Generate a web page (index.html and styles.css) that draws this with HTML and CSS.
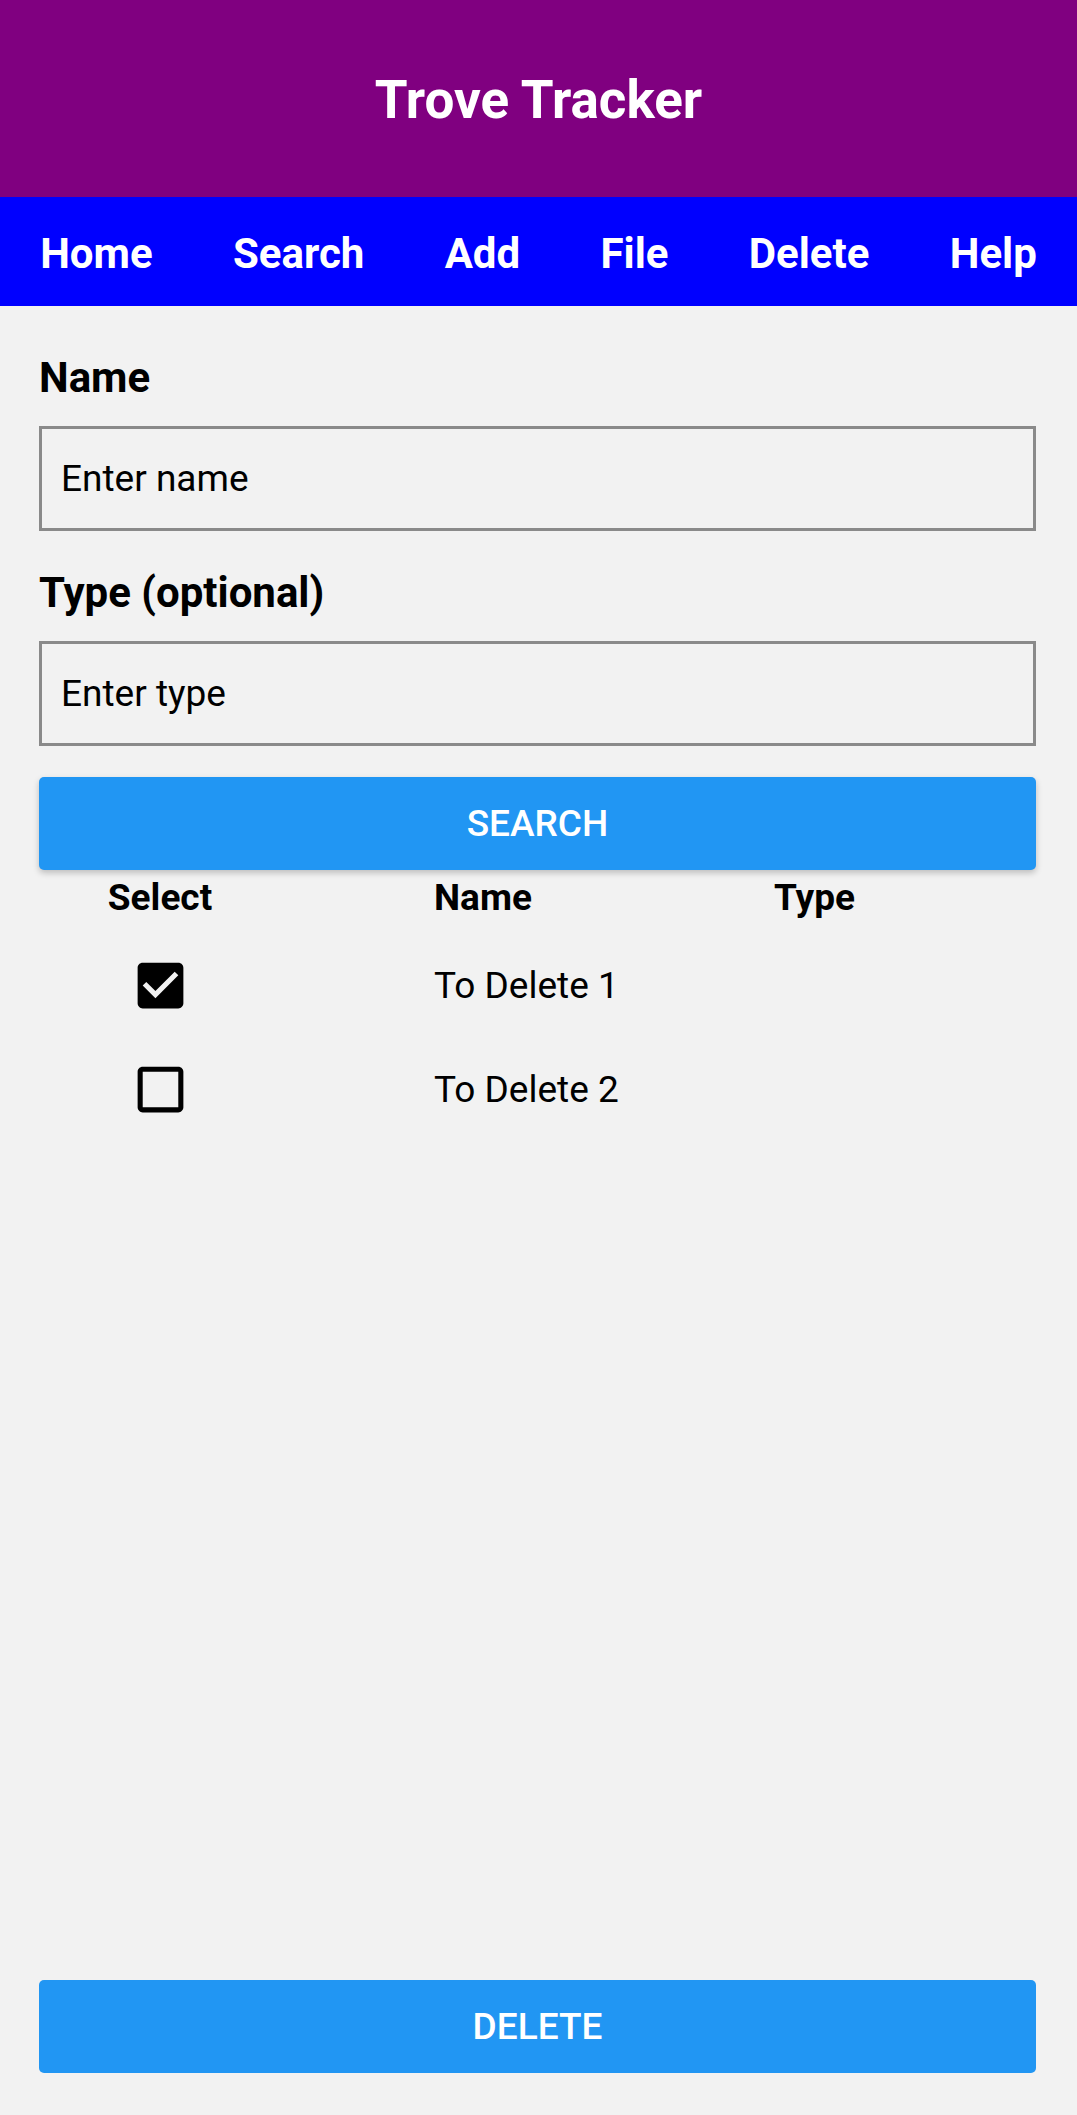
FILE: index.html
```html
<!DOCTYPE html>
<html lang="en">
<head>
<meta charset="utf-8">
<title>Trove Tracker</title>
<link rel="stylesheet" href="styles.css">
</head>
<body>
<div class="page">
  <header class="topbar">
    <h1 class="title">Trove Tracker</h1>
  </header>
  <nav class="nav">
    <span class="nav-item">Home</span>
    <span class="nav-item">Search</span>
    <span class="nav-item">Add</span>
    <span class="nav-item">File</span>
    <span class="nav-item">Delete</span>
    <span class="nav-item">Help</span>
  </nav>
  <main class="content">
    <label class="field-label">Name</label>
    <input class="field-input" type="text" placeholder="Enter name">
    <label class="field-label field-label-second">Type (optional)</label>
    <input class="field-input" type="text" placeholder="Enter type">
    <button class="btn btn-search" type="button">Search</button>

    <div class="table">
      <div class="row row-head">
        <div class="cell cell-select">Select</div>
        <div class="cell">Name</div>
        <div class="cell">Type</div>
      </div>
      <div class="table-body">
        <div class="row row-data">
          <div class="cell cell-select">
            <svg class="checkbox" viewBox="0 0 24 24" aria-label="checked"><path d="M19 3H5c-1.11 0-2 .9-2 2v14c0 1.1.89 2 2 2h14c1.11 0 2-.9 2-2V5c0-1.1-.89-2-2-2zm-9 14l-5-5 1.41-1.41L10 14.17l7.59-7.59L19 8l-9 9z"/></svg>
          </div>
          <div class="cell cell-text">To Delete 1</div>
          <div class="cell cell-text"></div>
        </div>
        <div class="row row-data">
          <div class="cell cell-select">
            <svg class="checkbox" viewBox="0 0 24 24" aria-label="unchecked"><path d="M19 5v14H5V5h14m0-2H5c-1.1 0-2 .9-2 2v14c0 1.1.9 2 2 2h14c1.1 0 2-.9 2-2V5c0-1.1-.9-2-2-2z"/></svg>
          </div>
          <div class="cell cell-text">To Delete 2</div>
          <div class="cell cell-text"></div>
        </div>
      </div>
    </div>

    <button class="btn btn-delete" type="button">Delete</button>
  </main>
</div>
</body>
</html>
```
FILE: styles.css
```css
* {
  box-sizing: border-box;
}

html, body {
  margin: 0;
  padding: 0;
}

body {
  background: #f2f2f2;
  font-family: Roboto, "Noto Sans", "Liberation Sans", sans-serif;
  color: #000;
}

.page {
  min-height: 100vh;
  display: flex;
  flex-direction: column;
}

.topbar {
  height: 197px;
  padding-top: 5px;
  background: #800080;
  display: flex;
  align-items: center;
  justify-content: center;
}

.title {
  margin: 0;
  color: #fff;
  font-size: 53px;
  font-weight: 700;
  line-height: 1.2;
}

.nav {
  height: 109px;
  padding-top: 6px;
  background: #0000ff;
  display: flex;
  align-items: center;
  justify-content: space-around;
}

.nav-item {
  color: #fff;
  font-size: 42px;
  font-weight: 700;
  line-height: 1.2;
}

.content {
  flex: 1;
  display: flex;
  flex-direction: column;
  padding: 47px 41px 42px 39px;
}

.field-label {
  font-size: 42px;
  font-weight: 700;
  line-height: 50px;
  margin-bottom: 23px;
}

.field-label-second {
  margin-top: 37px;
}

.field-input {
  height: 105px;
  border: 3px solid #8a8a8a;
  border-radius: 0;
  background: transparent;
  padding: 0 19px;
  font-family: inherit;
  font-size: 37px;
  color: #000;
  outline: none;
}

.field-input::placeholder {
  color: #000;
  opacity: 1;
}

.btn {
  height: 93px;
  border: none;
  border-radius: 5px;
  background: #2196f3;
  color: #fff;
  font-family: inherit;
  font-size: 37px;
  font-weight: 500;
  text-transform: uppercase;
  cursor: pointer;
}

.btn-search {
  margin-top: 31px;
  box-shadow: 0 3px 6px rgba(0, 0, 0, 0.22);
}

.btn-delete {
  margin-top: auto;
}

.table {
  margin-top: 5px;
}

.row {
  display: grid;
  grid-template-columns: 242px 187px 1fr;
  column-gap: 153px;
  align-items: center;
}

.row-head {
  height: 44px;
  font-size: 37px;
  font-weight: 700;
}

.table-body {
  margin-top: 14px;
}

.row-data {
  height: 104.5px;
  font-size: 37px;
}

.cell {
  white-space: nowrap;
}

.cell-select {
  display: flex;
  justify-content: center;
}

.checkbox {
  width: 61px;
  height: 61px;
  fill: #000;
  display: block;
}
```
